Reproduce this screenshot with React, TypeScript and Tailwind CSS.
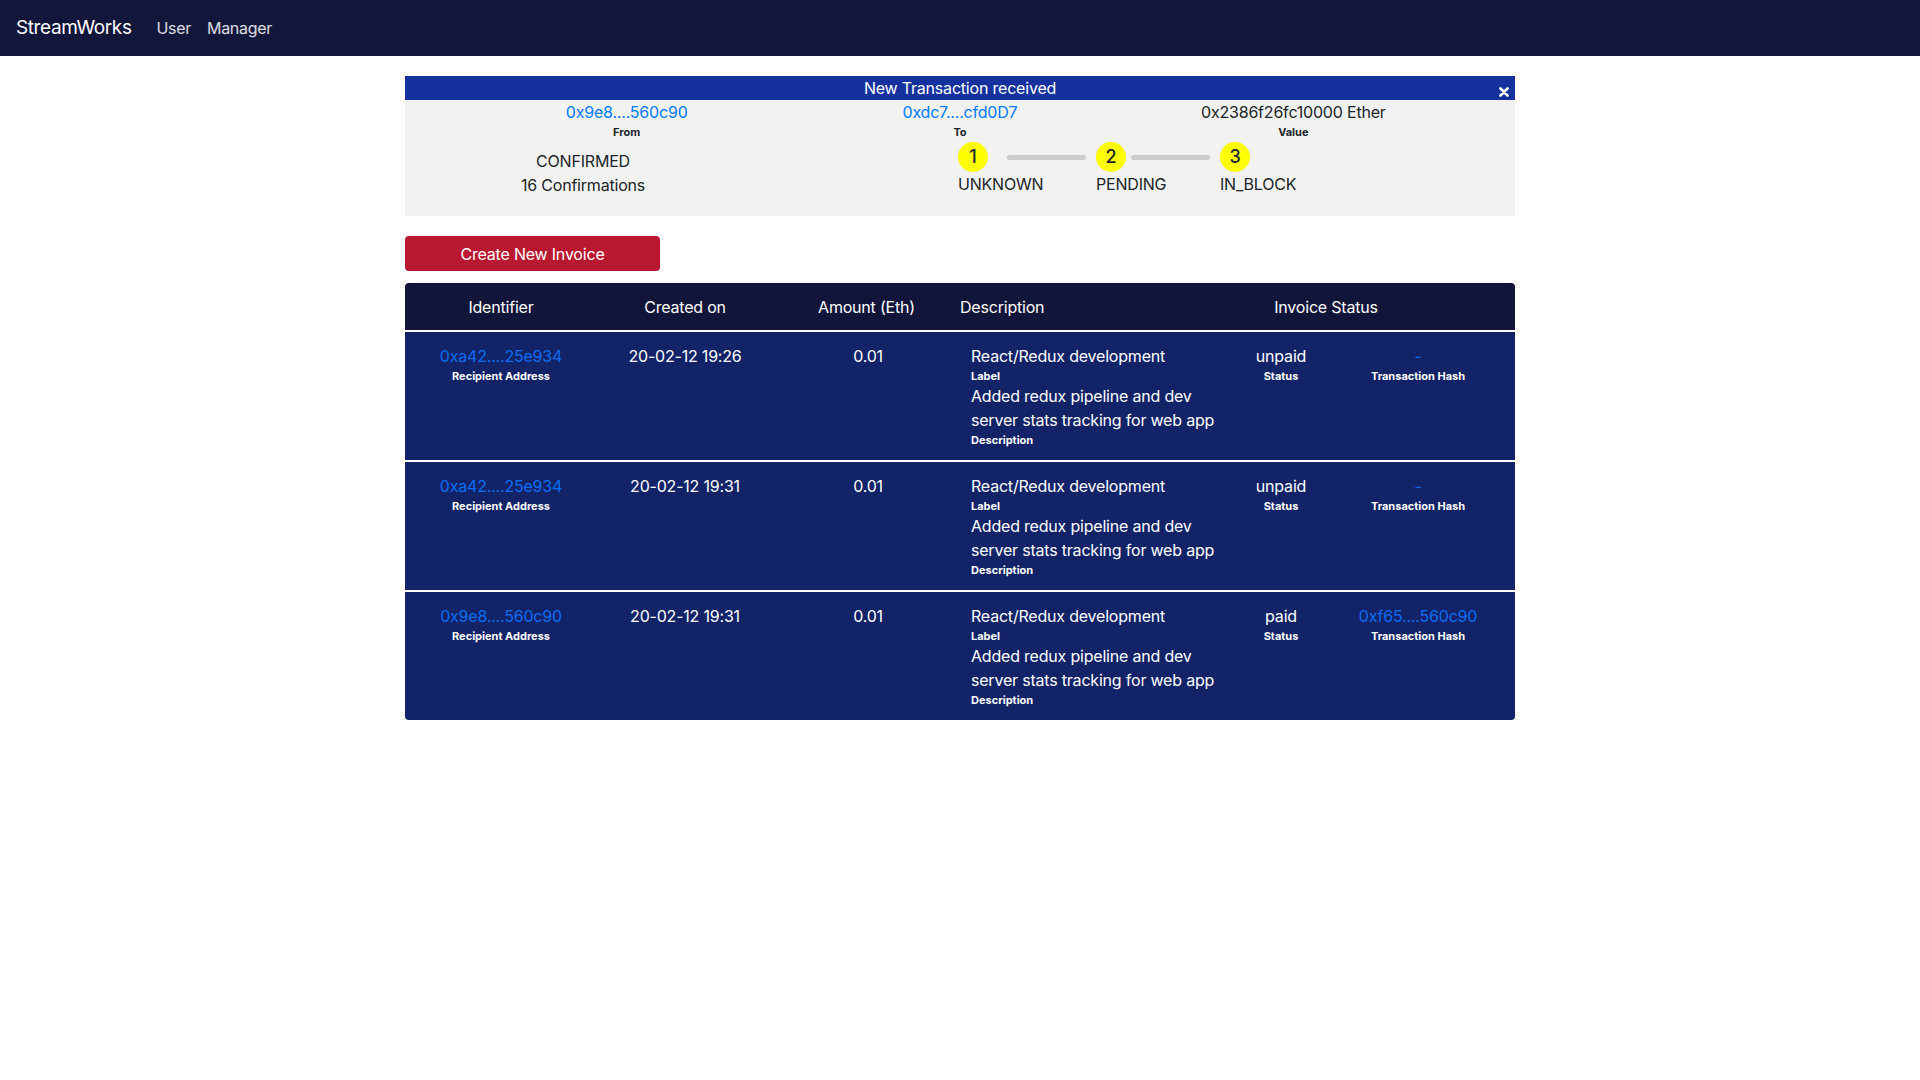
import React from "react";

const invoices = [
  { id: "0xa42....25e934", created: "20-02-12 19:26", amount: "0.01", status: "unpaid", hash: "-" },
  { id: "0xa42....25e934", created: "20-02-12 19:31", amount: "0.01", status: "unpaid", hash: "-" },
  { id: "0x9e8....560c90", created: "20-02-12 19:31", amount: "0.01", status: "paid", hash: "0xf65....560c90" },
];

function Step({ n, label, line, lineMl, lineW }: { n: string; label: string; line?: boolean; lineMl?: string; lineW?: string }) {
  return (
    <div className="flex flex-col">
      <div className="flex items-center h-[30px]">
        <div className="w-[30px] h-[30px] rounded-full bg-[#ffff00] flex items-center justify-center text-[18px] leading-none text-[#212529] font-medium">
          {n}
        </div>
        {line && <div className={`h-[5px] rounded-full bg-[#cccccc] ${lineMl} ${lineW}`} />}
      </div>
      <div className="text-[16px] leading-6 text-[#212529]">{label}</div>
    </div>
  );
}

export default function App() {
  return (
    <div className="min-h-screen bg-white font-['Inter','Liberation_Sans',sans-serif] text-[#212529]">
      <nav className="h-14 bg-[#12163b] flex items-center px-4">
        <span className="text-[19px] text-white mr-[17px] tracking-[-0.4px]">StreamWorks</span>
        <span className="text-[16px] text-white/85 px-2 tracking-[-0.3px]">User</span>
        <span className="text-[16px] text-white/85 px-2 tracking-[-0.3px]">Manager</span>
      </nav>

      <div className="w-[1110px] mx-auto tracking-[-0.2px]">
        {/* Transaction banner */}
        <div className="mt-5 bg-[#f2f2f2]">
          <div className="relative h-6 bg-[#15319d] text-white text-[16px] leading-6 text-center">
            New Transaction received
            <svg className="absolute right-[6px] bottom-[3px]" width="10" height="10" viewBox="0 0 10 10">
              <path d="M1.5 1.5 L8.5 8.5 M8.5 1.5 L1.5 8.5" stroke="white" strokeWidth="2.6" strokeLinecap="round" />
            </svg>
          </div>
          <div className="grid grid-cols-3 px-[55px] text-center">
            <div>
              <div className="text-[16px] leading-6 text-[#007bff]">0x9e8....560c90</div>
              <div className="text-[11px] leading-4 font-bold tracking-normal">From</div>
            </div>
            <div>
              <div className="text-[16px] leading-6 text-[#007bff]">0xdc7....cfd0D7</div>
              <div className="text-[11px] leading-4 font-bold tracking-normal">To</div>
            </div>
            <div>
              <div className="text-[16px] leading-6">0x2386f26fc10000 Ether</div>
              <div className="text-[11px] leading-4 font-bold tracking-normal">Value</div>
            </div>
          </div>
          <div className="flex items-start pb-[19px]">
            <div className="w-[356px] text-center text-[16px] leading-6 mt-[9px]">
              <div>CONFIRMED</div>
              <div>16 Confirmations</div>
            </div>
            <div className="ml-[197px] mt-[2px] flex">
              <div className="w-[138px]">
                <Step n="1" label="UNKNOWN" line lineMl="ml-[19px]" lineW="w-[79px]" />
              </div>
              <div className="w-[124px]">
                <Step n="2" label="PENDING" line lineMl="ml-[5px]" lineW="w-[79px]" />
              </div>
              <div>
                <Step n="3" label="IN_BLOCK" />
              </div>
            </div>
          </div>
        </div>

        {/* Button */}
        <button className="mt-5 w-[255px] h-[35px] rounded bg-[#b91930] text-white text-[16px] leading-6">
          Create New Invoice
        </button>

        {/* Table */}
        <div className="mt-[12px] flex flex-col gap-[2px]">
          <div className="h-[47px] rounded-t bg-[#12153a] text-white text-[16px] grid grid-cols-[192px_176px_187px_177px_378px] items-center">
            <div className="text-center">Identifier</div>
            <div className="text-center">Created on</div>
            <div className="text-center">Amount (Eth)</div>
            <div className="text-left">Description</div>
            <div className="text-center">Invoice Status</div>
          </div>
          {invoices.map((inv, i) => (
            <div
              key={i}
              className={`h-32 bg-[#122368] text-white grid grid-cols-[192px_176px_190px_278px_80px_194px] py-3 ${
                i === invoices.length - 1 ? "rounded-b" : ""
              }`}
            >
              <div className="text-center">
                <div className="text-[16px] leading-6 text-[#0b6ef6]">{inv.id}</div>
                <div className="text-[11px] leading-4 font-bold tracking-normal">Recipient Address</div>
              </div>
              <div className="text-center text-[16px] leading-6">{inv.created}</div>
              <div className="text-center text-[16px] leading-6">{inv.amount}</div>
              <div className="pl-2">
                <div className="text-[16px] leading-6">React/Redux development</div>
                <div className="text-[11px] leading-4 font-bold tracking-normal">Label</div>
                <div className="text-[16px] leading-6 w-[250px]">Added redux pipeline and dev server stats tracking for web app</div>
                <div className="text-[11px] leading-4 font-bold tracking-normal">Description</div>
              </div>
              <div className="text-center">
                <div className="text-[16px] leading-6">{inv.status}</div>
                <div className="text-[11px] leading-4 font-bold tracking-normal">Status</div>
              </div>
              <div className="text-center">
                <div className="text-[16px] leading-6 text-[#0b6ef6]">{inv.hash}</div>
                <div className="text-[11px] leading-4 font-bold tracking-normal">Transaction Hash</div>
              </div>
            </div>
          ))}
        </div>
      </div>
    </div>
  );
}
